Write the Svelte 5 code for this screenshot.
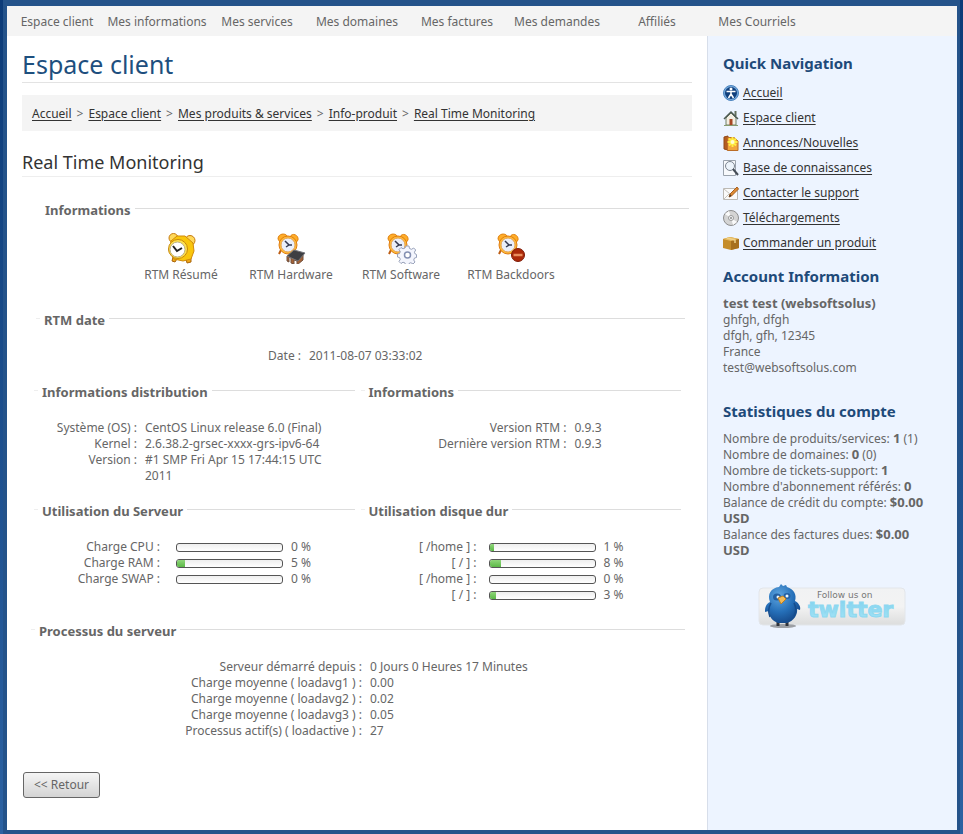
<script>
  const menu = ['Espace client', 'Mes informations', 'Mes services', 'Mes domaines', 'Mes factures', 'Mes demandes', 'Affiliés', 'Mes Courriels'];
  const crumbs = ['Accueil', 'Espace client', 'Mes produits & services', 'Info-produit', 'Real Time Monitoring'];
  const monitors = [
    { label: 'RTM Résumé', badge: 'none' },
    { label: 'RTM Hardware', badge: 'chip' },
    { label: 'RTM Software', badge: 'gear' },
    { label: 'RTM Backdoors', badge: 'stop' }
  ];
  const distribution = [
    ['Système (OS) :', 'CentOS Linux release 6.0 (Final)'],
    ['Kernel :', '2.6.38.2-grsec-xxxx-grs-ipv6-64'],
    ['Version :', '#1 SMP Fri Apr 15 17:44:15 UTC 2011']
  ];
  const versions = [['Version RTM :', '0.9.3'], ['Dernière version RTM :', '0.9.3']];
  const load = [['Charge CPU :', 0], ['Charge RAM :', 5], ['Charge SWAP :', 0]];
  const disks = [['[ /home ] :', 1], ['[ / ] :', 8], ['[ /home ] :', 0], ['[ / ] :', 3]];
  const processes = [
    ['Serveur démarré depuis :', '0 Jours 0 Heures 17 Minutes'],
    ['Charge moyenne ( loadavg1 ) :', '0.00'],
    ['Charge moyenne ( loadavg2 ) :', '0.02'],
    ['Charge moyenne ( loadavg3 ) :', '0.05'],
    ['Processus actif(s) ( loadactive ) :', '27']
  ];
  const quick = [
    ['home', 'Accueil'], ['house', 'Espace client'], ['news', 'Annonces/Nouvelles'], ['search', 'Base de connaissances'],
    ['mail', 'Contacter le support'], ['disc', 'Téléchargements'], ['box', 'Commander un produit']
  ];
  const stats = [
    ['Nombre de produits/services:', '1', '(1)'],
    ['Nombre de domaines:', '0', '(0)'],
    ['Nombre de tickets-support:', '1', ''],
    ["Nombre d'abonnement référés:", '0', ''],
    ['Balance de crédit du compte:', '$0.00 USD', ''],
    ['Balance des factures dues:', '$0.00 USD', '']
  ];
  // A non-zero share keeps a visible sliver of green
  const fill = (n) => (n ? n + 3 : 0);
</script>

{#snippet pairs(rows, kind)}
  <dl class="pairs {kind}">
    {#each rows as [term, value]}
      <dt>{term}</dt>
      <dd>{value}</dd>
    {/each}
  </dl>
{/snippet}

{#snippet gauges(rows, kind)}
  <dl class="pairs gauges {kind}">
    {#each rows as [term, value]}
      <dt>{term}</dt>
      <dd>
        <span class="gauge"><span class="level" style="width: {fill(value)}%"></span></span>
        {value} %
      </dd>
    {/each}
  </dl>
{/snippet}

<div class="frame">
  <nav class="menu">
    {#each menu as item}<a href="#top">{item}</a>{/each}
  </nav>
  <div class="columns">
    <main>
      <h1>Espace client</h1>
      <nav class="crumbs">
        {#each crumbs as crumb, i}{#if i}<span>&gt;</span>{/if}<a href="#top">{crumb}</a>{/each}
      </nav>
      <h2>Real Time Monitoring</h2>

      <section class="info">
        <h3 class="nodash">Informations</h3>
        <div class="monitors">
          {#each monitors as m}
            <a href="#top">
              <svg width="32" height="32" viewBox="0 0 32 32" aria-hidden="true">
                {#if m.badge === 'none'}
                  <path d="M8 25l-1 4 3 1 2-3M21 27l1 4 4-1v-5" fill="#f0a818" stroke="#a8640c" />
                  <circle cx="8.500" cy="6" r="4.500" fill="#ffd95a" stroke="#c77b10" />
                  <circle cx="25" cy="8.500" r="5" fill="#ffd95a" stroke="#c77b10" />
                  <path d="M12 4h8l8 7 1 8-3 8-8 2-9-2-5-8 2-10z" fill="#f9c60c" stroke="#d18a0a" />
                  <circle cx="13" cy="17" r="9.500" fill="#ffe24c" stroke="#c8880c" />
                  <circle cx="12.500" cy="17.500" r="7.500" fill="#fff" stroke="#b9ae86" />
                  <path d="M8 14l4 5 5-3" fill="none" stroke="#222" stroke-width="2" />
                {:else}
                  <path d="M6 18l-2 4M18 18l2 3" stroke="#bd5c12" stroke-width="2" />
                  <path d="M3 7c0-6 8-6 9-3v1h3c2-5 9-2 8 3l-3 4H6z" fill="#ffad28" stroke="#e18412" />
                  <circle cx="13" cy="13" r="9" fill="#ffbd35" stroke="#df7c13" />
                  <circle cx="13" cy="13" r="7" fill="#e9effb" stroke="#e6a052" />
                  <path d="M10 9l4 4-3 2M14 13h3" fill="none" stroke="#333950" stroke-width="1.500" />
                  {#if m.badge === 'chip'}
                    <path d="M12 24v5l2 1v-5l2 1v5l3 1v-4l3 1v4l6-5v-6" fill="#a56235" stroke="#70503e" />
                    <path d="M12 24l7-6 11 3-7 8z" fill="#3e3f43" stroke="#737479" />
                  {:else if m.badge === 'gear'}
                    <path d="M21 14h3l.5 2.500 2 .8 2.200-1.300 2 2-1.300 2.200.8 1.800 1.300.5v3l-2 .5-.8 2 1.300 2-2 2-2.200-1.300-1.800.8-.5 1.500h-3l-.5-2-2-.8-2 1.300-2-2 1.300-2.200-.8-1.800-2-.5v-3l2-.5.8-1.800-1.300-2.200 2-2 2 1.300 2-.8z" fill="#f3f5fd" stroke="#99a2ba" />
                    <circle cx="22.500" cy="23" r="3" fill="#fff" stroke="#8490b3" stroke-width="1.500" />
                  {:else}
                    <circle cx="23" cy="23" r="6.500" fill="#ac2909" stroke="#7d1b08" />
                    <path d="M18.500 23h9" stroke="#e98d5c" stroke-width="2.500" />
                  {/if}
                {/if}
              </svg>
              <span>{m.label}</span>
            </a>
          {/each}
        </div>
      </section>

      <section class="date">
        <h3>RTM date</h3>
        {@render pairs([['Date :', '2011-08-07 03:33:02']], 'when')}
      </section>

      <div class="duo">
        <section>
          <h3>Informations distribution</h3>
          {@render pairs(distribution, 'distribution')}
        </section>
        <section>
          <h3>Informations</h3>
          {@render pairs(versions, 'versions')}
        </section>
        <section>
          <h3>Utilisation du Serveur</h3>
          {@render gauges(load, 'load')}
        </section>
        <section>
          <h3>Utilisation disque dur</h3>
          {@render gauges(disks, 'disks')}
        </section>
      </div>

      <section class="processes">
        <h3>Processus du serveur</h3>
        {@render pairs(processes, 'process')}
      </section>

      <button type="button">&lt;&lt; Retour</button>
    </main>

    <aside>
      <h4>Quick Navigation</h4>
      <ul>
        {#each quick as [icon, label]}
          <li>
            <svg width="16" height="16" viewBox="0 0 16 16" aria-hidden="true">
              {#if icon === 'home'}
                <circle cx="8" cy="8" r="7.500" fill="#75a9dc" stroke="#4b83bd" />
                <circle cx="8" cy="8" r="6" fill="#103f7c" />
                <circle cx="8" cy="4" r="1.500" fill="#fff" />
                <path d="M3.500 6.500h9M8 6v4M8 9l-2.500 4M8 9l2.500 4" stroke="#fff" stroke-width="1.500" />
              {:else if icon === 'house'}
                <path d="M11.500 1h2v5h-2z" fill="#64705c" />
                <path d="M3 8l5-5 5 5v7H3z" fill="#f3eee2" stroke="#71806a" />
                <path d="M1 9l7-7 7 7" fill="none" stroke="#4d5a52" stroke-width="1.500" />
                <path d="M6.500 9h3v6h-3z" fill="#a74825" />
                <path d="M1 15.500h14" stroke="#879b6f" />
              {:else if icon === 'news'}
                <path d="M1 2l4-1v14l-4-1z" fill="#b45c20" stroke="#914817" />
                <path d="M4.500 2.500H11L15 6v9.500H4.500z" fill="#f2a63d" stroke="#bb6d27" />
                <path d="M9.500 2v10M4.500 7h10M6 3.500l7 7M13 3.500l-7 7" stroke="#ffef43" stroke-width="2" />
                <circle cx="9.500" cy="7" r="2" fill="#fffbd0" />
              {:else if icon === 'search'}
                <path d="M.5.500h12v15H.5z" fill="#f7f9fc" stroke="#9aa2ac" />
                <circle cx="7" cy="6" r="4.500" fill="#edf4fb" stroke="#7c8490" />
                <path d="M10 9l5 6" stroke="#454d57" stroke-width="2" />
              {:else if icon === 'mail'}
                <path d="M.5 3.500h14v11H.5z" fill="#fafafa" stroke="#bcb9b4" />
                <path d="M1 4l6 5 7-5M1 14l5-5" fill="none" stroke="#c6c3bd" />
                <path d="M6 12l1-3 7-7 1.500 2-7 7z" fill="#de8b32" stroke="#a75f22" />
                <path d="M6 12l1-3 1.500 2z" fill="#4b3a2c" />
              {:else if icon === 'disc'}
                <circle cx="8" cy="8" r="7.500" fill="#d4d4d4" stroke="#8d8d8d" />
                <path d="M8 8L2 4l4-3zM8 8l6 4-4 3z" fill="#fafafa" />
                <circle cx="8" cy="8" r="2.500" fill="#f4f6f8" stroke="#999" />
                <circle cx="8" cy="8" r="1" fill="#888" />
              {:else}
                <path d="M0 4l7-2 9 2v9l-8 2-8-2z" fill="#c58d2b" />
                <path d="M0 4l7-2 9 2-8 2z" fill="#e8bd64" />
                <path d="M8 6l8-2v9l-8 2z" fill="#a7701d" />
                <path d="M4 3l8 2v3" fill="none" stroke="#f0d28a" stroke-width="1.500" />
              {/if}
            </svg>
            <a href="#top">{label}</a>
          </li>
        {/each}
      </ul>
      <h4>Account Information</h4>
      <p>
        <strong>test test (websoftsolus)</strong><br />
        ghfgh, dfgh<br />dfgh, gfh, 12345<br />France<br />test@websoftsolus.com
      </p>
      <h4>Statistiques du compte</h4>
      <div class="stats">
        {#each stats as [label, value, extra]}
          <div>{label} <strong>{value}</strong> {extra}</div>
        {/each}
      </div>
      <a class="twitter" href="#top" aria-label="Follow us on twitter">
        <svg width="148" height="46" viewBox="0 0 148 46">
          <defs>
            <linearGradient id="plate" x1="0" y1="0" x2="0" y2="1">
              <stop offset="0" stop-color="#f1f2f3" />
              <stop offset="0.500" stop-color="#f3f3f3" />
              <stop offset="1" stop-color="#dcdddd" />
            </linearGradient>
            <radialGradient id="bird" cx="0.400" cy="0.300" r="0.700">
              <stop offset="0" stop-color="#5fa6e0" />
              <stop offset="0.600" stop-color="#256fb8" />
              <stop offset="1" stop-color="#174c8d" />
            </radialGradient>
            <linearGradient id="word" x1="0" y1="0" x2="0" y2="1">
              <stop offset="0" stop-color="#7fd0ee" />
              <stop offset="1" stop-color="#a5e5f7" />
            </linearGradient>
          </defs>
          <rect x="1" y="4" width="146" height="37" rx="4" fill="url(#plate)" stroke="#e3e6ea" />
          <ellipse cx="25" cy="42" rx="13" ry="2" fill="#9c9fa4" />
          <path d="M20 38v4M29 38v4" stroke="#30343c" stroke-width="3" />
          <path d="M21 3l2-3 2 2 3-1 1 2c7 2 10 8 8 14 4 2 6 6 5 9l-3-1c1 5-3 12-10 14h-9c-6-2-9-7-9-12l-4 1c0-5 1-8 5-10C9 10 13 4 21 3z" fill="url(#bird)" />
          <path d="M13 19c-3 5-3 9-1 14M36 19c3 5 2 9 0 13" fill="none" stroke="#174d8c" stroke-width="1.500" />
          <ellipse cx="19" cy="13" rx="4" ry="3.500" fill="#2460a2" />
          <ellipse cx="29" cy="12" rx="3.500" ry="3" fill="#2460a2" />
          <circle cx="20" cy="13" r="1.500" fill="#eaf6ff" />
          <circle cx="29" cy="12" r="1.500" fill="#eaf6ff" />
          <path d="M20 14l5-2 3 3-5 5z" fill="#f2bb57" stroke="#bd7e22" />
          <text x="59" y="14" class="follow">Follow us on</text>
          <text x="50" y="33" class="word">twitter</text>
        </svg>
      </a>
    </aside>
  </div>
</div>

<style>
  :global(body) {
    background: linear-gradient(#0c3b78, #2c62a2) fixed;
  }
  .frame {
    margin: 0 3px;
    border: solid #24538a;
    border-width: 6px 3px 4px 4px;
    background: #fff;
    color: #666;
    font: 12px/16px 'Noto Sans', 'Lucida Grande', sans-serif;
  }
  .menu {
    display: grid;
    grid-template-columns: repeat(8, 100px);
    padding: 8px 0 6px;
    background: #f4f4f4;
    text-align: center;
  }
  .menu a, .monitors a {
    color: #666;
    text-decoration: none;
  }
  .columns {
    display: flex;
  }
  main {
    flex: 1;
    box-sizing: border-box;
    padding: 12px 15px 32px;
  }
  h1, h2, h3, h4, p, ul, dl, dd {
    margin: 0;
    padding: 0;
  }
  h1 {
    padding-bottom: 2px;
    border-bottom: 1px solid #e3e3e3;
    color: #1e4f7e;
    font-size: 25px;
    font-weight: 400;
    line-height: 32px;
  }
  .crumbs {
    display: flex;
    flex-wrap: wrap;
    gap: 5px;
    margin-top: 12px;
    padding: 11px 10px 9px;
    background: #f4f4f4;
  }
  .crumbs a, li a {
    color: #333;
    text-underline-offset: 2px;
  }
  h2 {
    margin-top: 17px;
    border-bottom: 1px solid #eee;
    color: #333;
    font-size: 18px;
    font-weight: 400;
    line-height: 28px;
  }
  h3 {
    display: flex;
    gap: 4px;
    font-size: 13px;
    line-height: 16px;
  }
  h3::before, h3::after {
    content: '';
    width: 4px;
    height: 1px;
    margin-top: 6px;
    background: #ddd;
  }
  h3::before {
    background: #eee;
  }
  .nodash::before {
    background: none;
  }
  h3::after {
    flex: 1;
  }
  .info {
    margin: 25px 3px 0 15px;
  }
  .monitors {
    display: grid;
    grid-template-columns: repeat(4, 110px);
    margin: 14px 0 0 89px;
  }
  .monitors a {
    display: flex;
    flex-direction: column;
    align-items: center;
    gap: 3px;
  }
  .date {
    margin: 29px 7px 0 14px;
  }
  .duo {
    display: grid;
    grid-template-columns: 1fr 1fr;
    gap: 19px 6px;
    margin: 20px 11px 0 12px;
  }
  .processes {
    margin: 20px 7px 0 9px;
  }
  .pairs {
    display: grid;
    column-gap: 8px;
    margin-top: 20px;
  }
  dt {
    text-align: right;
  }
  .when {
    grid-template-columns: 265px 1fr;
  }
  .distribution {
    grid-template-columns: 103px 200px;
  }
  .versions {
    grid-template-columns: 206px 1fr;
  }
  .process {
    grid-template-columns: 331px 1fr;
  }
  .gauges dd {
    display: flex;
    align-items: center;
    gap: 8px;
  }
  .load {
    grid-template-columns: 126px 1fr;
    column-gap: 16px;
  }
  .disks {
    grid-template-columns: 116px 1fr;
    column-gap: 12px;
  }
  .gauge {
    box-sizing: border-box;
    width: 107px;
    height: 9px;
    overflow: hidden;
    border: 1px solid #555;
    border-radius: 3px;
    background: linear-gradient(#eee, #fff);
  }
  .level {
    display: block;
    height: 7px;
    background: linear-gradient(#8fd67a, #5cb947);
  }
  button {
    display: block;
    margin: 33px 0 0 1px;
    padding: 4px 10px;
    border: 1px solid #666;
    border-radius: 3px;
    background: linear-gradient(#f5f5f5, #d4d4d4);
    color: #666;
    font: inherit;
  }
  aside {
    box-sizing: border-box;
    width: 250px;
    padding: 17px 19px 32px 15px;
    border-left: 1px solid #d7deea;
    background: #edf4ff;
  }
  h4 {
    color: #1e4a79;
    font-size: 15px;
    line-height: 20px;
  }
  ul {
    margin: 7px 0 11px;
    list-style: none;
  }
  li {
    display: flex;
    align-items: center;
    gap: 4px;
    height: 25px;
  }
  p {
    margin: 10px 0 25px;
  }
  strong {
    font-size: 13px;
    line-height: 14px;
  }
  .stats {
    margin-top: 10px;
  }
  .twitter {
    display: block;
    width: 148px;
    height: 46px;
    margin: 25px 0 0 35px;
  }
  .follow {
    fill: #777;
    font: 9px 'DejaVu Sans', sans-serif;
  }
  .word {
    fill: url(#word);
    stroke: #8ed8f0;
    stroke-width: 1px;
    font: bold 22px 'DejaVu Sans', sans-serif;
  }
</style>
